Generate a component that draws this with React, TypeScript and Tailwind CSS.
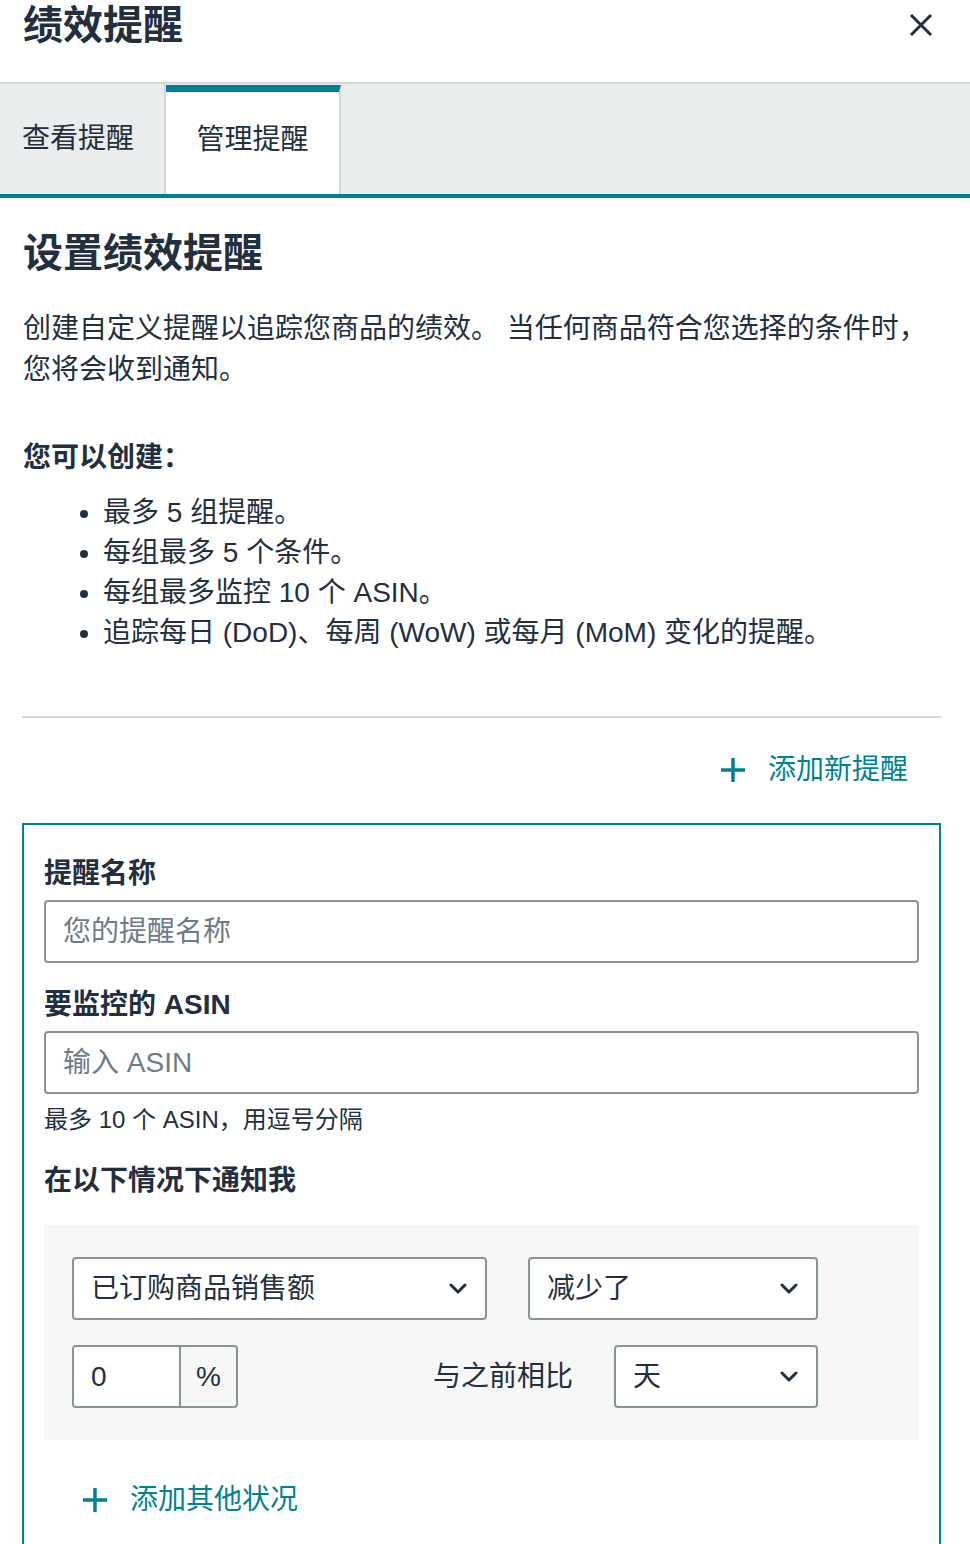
import React from 'react';

const font = 'font-["Liberation_Sans","Noto_Sans_CJK_SC",sans-serif]';

const Chevron = () => (
  <svg width="18" height="11" viewBox="0 0 18 11" fill="none" className="shrink-0">
    <polyline points="2,2 9,9 16,2" stroke="#232f3e" strokeWidth="3" strokeLinecap="round" strokeLinejoin="round" />
  </svg>
);

const Plus = () => (
  <svg width="26" height="26" viewBox="0 0 26 26" fill="none" className="shrink-0">
    <path d="M13 1v24M1 13h24" stroke="#008296" strokeWidth="3.5" />
  </svg>
);

const Select = ({ label, className }: { label: string; className: string }) => (
  <div className={`flex h-[63px] items-center justify-between rounded-[4px] border-2 border-[#879596] bg-white pl-[17px] pr-[18px] ${className}`}>
    <span className="text-[28px] leading-[40px]">{label}</span>
    <Chevron />
  </div>
);

export default function App() {
  return (
    <div className={`${font} w-[970px] min-h-[1544px] overflow-hidden bg-white text-[#232f3e]`}>
      {/* header */}
      <div className="flex h-[82px] items-start justify-between pl-[23px] pr-[36px]">
        <h1 className="text-[40px] font-bold leading-[50px]">绩效提醒</h1>
        <svg width="26" height="26" viewBox="0 0 26 26" fill="none" className="mt-[12px]">
          <path d="M3 3l20 20M23 3L3 23" stroke="#232f3e" strokeWidth="3" />
        </svg>
      </div>

      {/* tabs */}
      <div className="flex h-[116px] border-t-2 border-b-4 border-t-[#d5d9d9] border-b-[#008296] bg-[#eaeded]">
        <div className="flex w-[166px] items-center border-r-2 border-[#d5d9d9] pl-[22px] text-[28px] leading-[40px]">查看提醒</div>
        <div className="mt-px flex w-[175px] items-center justify-center border-t-[7px] border-r-2 border-t-[#008296] border-r-[#d5d9d9] bg-white pb-[7px] text-[28px] leading-[40px]">管理提醒</div>
      </div>

      {/* body */}
      <div className="pl-[22px] pr-[29px]">
        <h2 className="mt-[30px] pl-px text-[40px] font-bold leading-[50px]">设置绩效提醒</h2>
        <p className="mt-[30px] pl-px text-[28px] leading-[41px]">
          创建自定义提醒以追踪您商品的绩效。 当任何商品符合您选择的条件时，您将会收到通知。
        </p>
        <p className="mt-[47px] pl-px text-[28px] font-bold leading-[41px]">您可以创建：</p>
        <ul className="mt-[15px] list-disc pl-[81px] text-[28px] leading-[40px]">
          <li>最多 5 组提醒。</li>
          <li>每组最多 5 个条件。</li>
          <li>每组最多监控 10 个 ASIN。</li>
          <li>追踪每日 (DoD)、每周 (WoW) 或每月 (MoM) 变化的提醒。</li>
        </ul>

        <div className="mt-[63px] h-[2px] bg-[#d5d9d9]" />

        <div className="mt-[32px] flex items-center justify-end gap-[22px] pr-[33px] text-[28px] leading-[40px] text-[#008296]">
          <Plus />
          <span>添加新提醒</span>
        </div>

        {/* card */}
        <div className="mt-[33px] h-[740px] border-2 border-[#008296] px-[20px] pt-[29px]">
          <label className="block text-[28px] font-bold leading-[40px]">提醒名称</label>
          <div className="mt-[6px] flex h-[63px] items-center rounded-[4px] border-2 border-[#879596] pl-[17px] text-[28px] text-[#6f7b87]">
            您的提醒名称
          </div>

          <label className="mt-[22px] block text-[28px] font-bold leading-[40px]">要监控的 ASIN</label>
          <div className="mt-[6px] flex h-[63px] items-center rounded-[4px] border-2 border-[#879596] pl-[17px] text-[28px] text-[#6f7b87]">
            输入 ASIN
          </div>
          <p className="mt-[9px] text-[24px] leading-[34px]">最多 10 个 ASIN，用逗号分隔</p>

          <p className="mt-[24px] text-[28px] font-bold leading-[40px]">在以下情况下通知我</p>

          <div className="mt-[24px] bg-[#f7f7f7] px-[28px] py-[32px]">
            <div className="flex w-[746px] flex-col gap-[25px]">
              <div className="flex gap-[41px]">
                <Select label="已订购商品销售额" className="w-[415px]" />
                <Select label="减少了" className="w-[290px]" />
              </div>
              <div className="flex items-center justify-between">
                <div className="flex h-[63px] w-[166px] rounded-[4px] border-2 border-[#879596] text-[28px]">
                  <div className="flex w-[105px] items-center rounded-l-[3px] bg-white pl-[17px]">0</div>
                  <div className="flex flex-1 items-center justify-center border-l-2 border-[#879596]">%</div>
                </div>
                <div className="flex items-center gap-[41px]">
                  <span className="text-[28px] leading-[40px]">与之前相比</span>
                  <Select label="天" className="w-[204px]" />
                </div>
              </div>
            </div>
          </div>

          <div className="mt-[40px] flex items-center gap-[22px] pl-[38px] text-[28px] leading-[40px] text-[#008296]">
            <Plus />
            <span>添加其他状况</span>
          </div>
        </div>
      </div>
    </div>
  );
}
